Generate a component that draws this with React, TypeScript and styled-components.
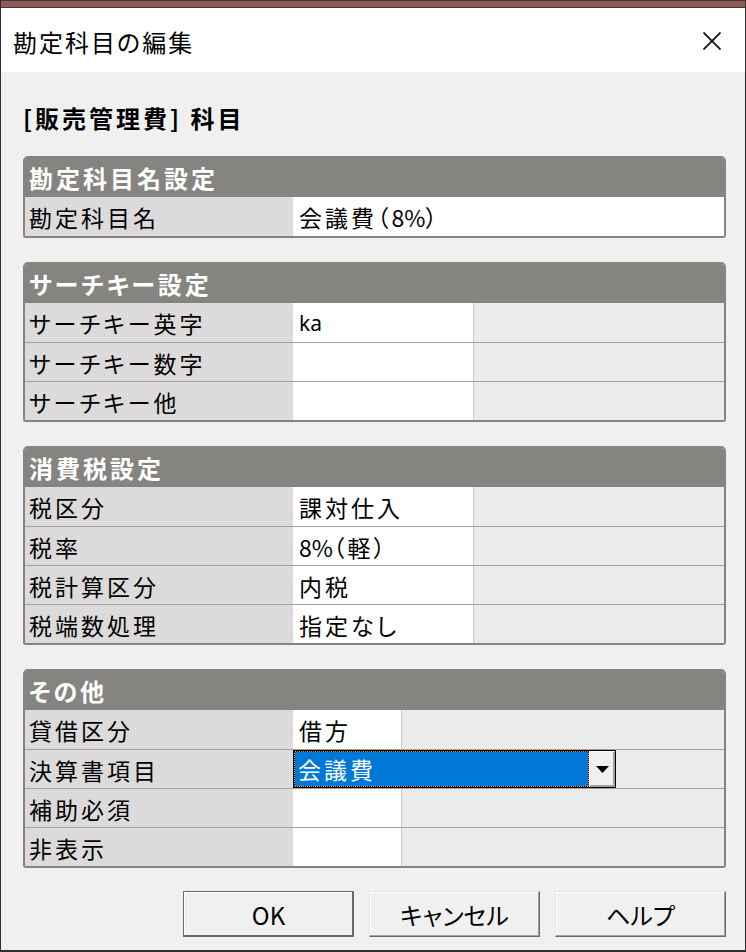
import React from "react";
import styled, { createGlobalStyle } from "styled-components";

const GlobalStyle = createGlobalStyle`
  html, body {
    margin: 0;
    padding: 0;
    background: #f0f0f0;
  }
  body {
    font-family: "Noto Sans CJK JP", "Noto Sans", sans-serif;
  }
  * { box-sizing: border-box; }
`;

const Window = styled.div`
  width: 746px;
  height: 952px;
  display: flex;
  flex-direction: column;
  background: #f0f0f0;
  border-left: 1px solid #2e2e2e;
  border-right: 1px solid #2e2e2e;
  border-bottom: 2px solid #2e2e2e;
  overflow: hidden;
`;

const TopStrip = styled.div`
  height: 8px;
  flex: none;
  background: #8a5c57;
  border-top: 1px solid #4b3533;
  border-bottom: 1px solid #4b3533;
`;

const TitleBar = styled.div`
  height: 64px;
  flex: none;
  background: #ffffff;
  display: flex;
  align-items: center;
  justify-content: space-between;
  padding: 2px 24px 0 12px;
`;

const TitleText = styled.div`
  font-size: 24px;
  letter-spacing: 2px;
  font-feature-settings: "palt";
  color: #000;
`;

const CloseButton = styled.div`
  width: 18px;
  height: 18px;
  display: flex;
`;

const Body = styled.div`
  flex: 1;
  display: flex;
  flex-direction: column;
  padding: 30px 19px 0 22px;
  gap: 24px;
`;

const Heading = styled.div`
  height: 32px;
  line-height: 32px;
  font-size: 24px;
  font-weight: bold;
  letter-spacing: 3px;
  color: #000;
  margin-bottom: -2px;
`;

const Panel = styled.div`
  border: 2px solid #868480;
  border-radius: 5px 5px 3px 3px;
  overflow: hidden;
  background: #ebebeb;
`;

const PanelHeader = styled.div`
  height: 39px;
  background: #868480;
  color: #ffffff;
  font-size: 24px;
  font-weight: bold;
  letter-spacing: 3px;
  font-feature-settings: "palt";
  display: flex;
  align-items: center;
  padding-left: 4px;
`;

const Row = styled.div`
  height: 39px;
  display: flex;
  align-items: stretch;
  & + & {
    border-top: 1px solid #a0a0a0;
  }
`;

const Label = styled.div`
  width: 268px;
  flex: none;
  background: #dcdadb;
  font-size: 23px;
  letter-spacing: 3px;
  font-feature-settings: "palt";
  color: #000;
  display: flex;
  align-items: center;
  padding: 1px 0 0 4px;
`;

const Value = styled.div<{ $width?: number }>`
  ${(p) => (p.$width ? `width: ${p.$width}px; flex: none;` : `flex: 1;`)}
  background: #ffffff;
  font-size: 23px;
  letter-spacing: 3px;
  font-feature-settings: "palt";
  color: #000;
  display: flex;
  align-items: center;
  padding: 1px 0 0 6px;
  white-space: nowrap;
`;

const Narrow = styled.span`
  letter-spacing: 0;
`;

const LatinValue = styled.span`
  font-family: "Noto Sans", "Noto Sans CJK JP", sans-serif;
  letter-spacing: 0;
  font-size: 21px;
`;

const Filler = styled.div`
  flex: 1;
  background: #ebebeb;
  border-left: 1px solid #c8c8c8;
`;

const ComboRowFiller = styled.div`
  flex: 1;
  background: #ebebeb;
`;

const Combo = styled.div`
  width: 323px;
  flex: none;
  display: flex;
  border: 1px solid #000;
  background: #f0f0f0;
`;

const ComboSelection = styled.div`
  flex: 1;
  border: 1px dotted #000;
  background: linear-gradient(#0078d7, #0078d7) padding-box, #f0902a;
  color: #ffffff;
  font-size: 23px;
  letter-spacing: 3px;
  display: flex;
  align-items: center;
  padding-left: 3px;
`;

const ComboButton = styled.div`
  width: 26px;
  flex: none;
  background: #f0f0f0;
  box-shadow: inset 1px 1px #ffffff, inset -2px -2px #a0a0a0;
  display: flex;
  align-items: center;
  justify-content: center;
`;

const ButtonRow = styled.div`
  display: flex;
  justify-content: flex-end;
  gap: 15px;
  margin-top: -1px;
`;

const DialogButton = styled.div<{ $default?: boolean }>`
  width: 171px;
  height: 46px;
  display: flex;
  align-items: center;
  justify-content: center;
  background: #f0f0f0;
  font-size: 24px;
  font-feature-settings: "palt";
  color: #000;
  border: 1px solid;
  border-color: ${(p) =>
    p.$default ? "#6a6a6a" : "#e3e3e3 #6a6a6a #6a6a6a #e3e3e3"};
  box-shadow: ${(p) =>
    p.$default
      ? "inset -1px -1px #6a6a6a, inset 1px 1px #ffffff"
      : "inset -1px -1px #a0a0a0, inset 1px 1px #ffffff"};
`;

type RowData = { label: string; value?: React.ReactNode };

const RowsPanel: React.FC<{
  title: string;
  rows: RowData[];
  valueWidth?: number;
}> = ({ title, rows, valueWidth }) => (
  <Panel>
    <PanelHeader>{title}</PanelHeader>
    {rows.map((r) => (
      <Row key={r.label}>
        <Label>{r.label}</Label>
        <Value $width={valueWidth}>{r.value}</Value>
        {valueWidth ? <Filler /> : null}
      </Row>
    ))}
  </Panel>
);

export default function App() {
  return (
    <>
      <GlobalStyle />
      <Window>
        <TopStrip />
        <TitleBar>
          <TitleText>勘定科目の編集</TitleText>
          <CloseButton>
            <svg width="18" height="18" viewBox="0 0 18 18">
              <path
                d="M0.5 0.5 L17.5 17.5 M17.5 0.5 L0.5 17.5"
                stroke="#111"
                strokeWidth="1.8"
                fill="none"
              />
            </svg>
          </CloseButton>
        </TitleBar>
        <Body>
          <Heading>[販売管理費] 科目</Heading>
          <RowsPanel
            title="勘定科目名設定"
            rows={[
              {
                label: "勘定科目名",
                value: (
                  <>
                    会議費（<Narrow>8%</Narrow>）
                  </>
                ),
              },
            ]}
          />
          <RowsPanel
            title="サーチキー設定"
            valueWidth={180}
            rows={[
              { label: "サーチキー英字", value: <LatinValue>ka</LatinValue> },
              { label: "サーチキー数字" },
              { label: "サーチキー他" },
            ]}
          />
          <RowsPanel
            title="消費税設定"
            valueWidth={180}
            rows={[
              { label: "税区分", value: "課対仕入" },
              {
                label: "税率",
                value: (
                  <>
                    <Narrow>8%</Narrow>（軽）
                  </>
                ),
              },
              { label: "税計算区分", value: "内税" },
              { label: "税端数処理", value: "指定なし" },
            ]}
          />
          <Panel>
            <PanelHeader>その他</PanelHeader>
            <Row>
              <Label>貸借区分</Label>
              <Value $width={108}>借方</Value>
              <Filler />
            </Row>
            <Row>
              <Label>決算書項目</Label>
              <Combo>
                <ComboSelection>会議費</ComboSelection>
                <ComboButton>
                  <svg width="13" height="7" viewBox="0 0 13 7">
                    <path d="M0 0 L13 0 L6.5 7 Z" fill="#000" />
                  </svg>
                </ComboButton>
              </Combo>
              <ComboRowFiller />
            </Row>
            <Row>
              <Label>補助必須</Label>
              <Value $width={108} />
              <Filler />
            </Row>
            <Row>
              <Label>非表示</Label>
              <Value $width={108} />
              <Filler />
            </Row>
          </Panel>
          <ButtonRow>
            <DialogButton $default>OK</DialogButton>
            <DialogButton>キャンセル</DialogButton>
            <DialogButton>ヘルプ</DialogButton>
          </ButtonRow>
        </Body>
      </Window>
    </>
  );
}
